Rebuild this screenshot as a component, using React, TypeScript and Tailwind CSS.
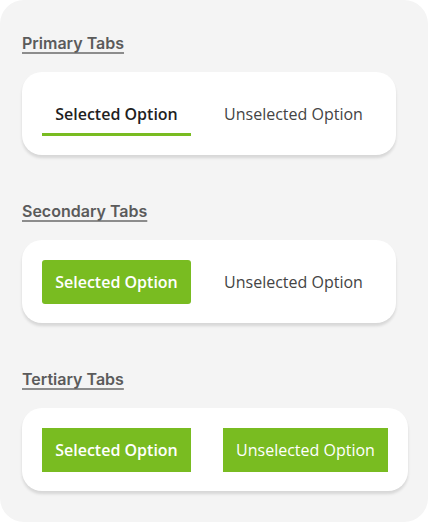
const GREEN = 'bg-[#79bc21]';

function Heading({ children }: { children: string }) {
  return (
    <h2 className="h-[20px] text-[16px] leading-[20px] font-semibold text-[#5b5b5b] underline decoration-[#8c8c8c] decoration-[1.5px] underline-offset-[3px] [font-family:Inter,sans-serif]">
      {children}
    </h2>
  );
}

export default function App() {
  return (
    <div className="w-[430px] h-[524px] bg-white">
      <div className="w-[428px] h-[522px] rounded-[24px] bg-[#f4f4f4] pl-[22px] pt-[33px] flex flex-col [font-family:'Open_Sans',sans-serif]">
        <Heading>Primary Tabs</Heading>
        <div className="mt-[19px] w-[374px] h-[83px] rounded-[20px] bg-white shadow-[0_3px_3px_rgba(0,0,0,0.12)] flex items-center pl-[20px] gap-[20px]">
          <button className="w-[149px] h-[44px] pt-[4px] border-b-[3px] border-[#79bc21] text-[16px] font-semibold text-[#1f1f1f]">
            Selected Option
          </button>
          <button className="w-[165px] h-[44px] text-[16px] text-[#444]">Unselected Option</button>
        </div>

        <div className="mt-[46px]">
          <Heading>Secondary Tabs</Heading>
        </div>
        <div className="mt-[19px] w-[374px] h-[83px] rounded-[20px] bg-white shadow-[0_3px_3px_rgba(0,0,0,0.12)] flex items-center pl-[20px] gap-[20px]">
          <button className={`w-[149px] h-[44px] rounded-[3px] ${GREEN} text-[16px] font-semibold text-white`}>
            Selected Option
          </button>
          <button className="w-[165px] h-[44px] text-[16px] text-[#444]">Unselected Option</button>
        </div>

        <div className="mt-[46px]">
          <Heading>Tertiary Tabs</Heading>
        </div>
        <div className="mt-[19px] w-[386px] h-[83px] rounded-[20px] bg-white shadow-[0_3px_3px_rgba(0,0,0,0.12)] flex items-center pl-[20px] gap-[32px]">
          <button className={`w-[149px] h-[44px] ${GREEN} text-[16px] font-semibold text-white`}>
            Selected Option
          </button>
          <button className={`w-[165px] h-[44px] ${GREEN} text-[16px] text-white`}>Unselected Option</button>
        </div>
      </div>
    </div>
  );
}
